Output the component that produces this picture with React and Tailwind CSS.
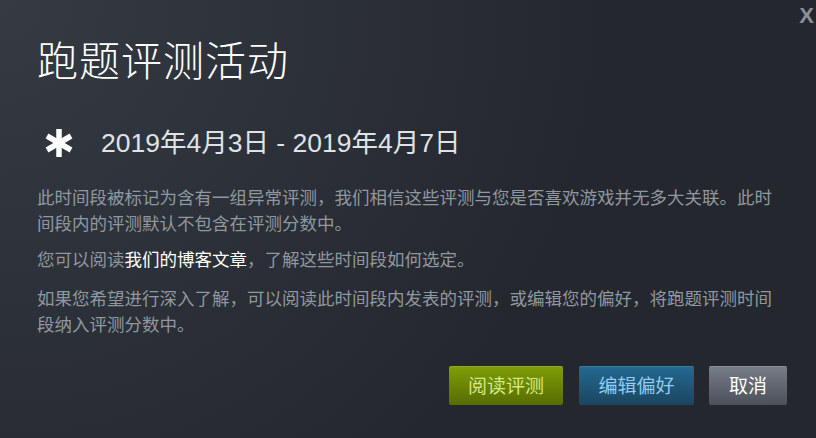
import React from 'react'

const cjk = "font-['Noto_Sans_CJK_SC',_'Noto_Sans',_sans-serif]"

function Asterisk() {
    return (
        <svg width="30" height="28" viewBox="0 0 30 28" className="shrink-0">
            <g stroke="#fff" strokeWidth="5.5" strokeLinecap="butt">
                <line x1="15" y1="0" x2="15" y2="28" />
                <line x1="3" y1="7" x2="27" y2="21" />
                <line x1="3" y1="21" x2="27" y2="7" />
            </g>
        </svg>
    )
}

export default function App() {
    return (
        <div className={`relative w-[816px] h-[438px] overflow-hidden bg-[#24272e] bg-[radial-gradient(circle_at_top_left,_rgba(74,81,92,0.45)_0%,_rgba(74,81,92,0)_65%)] ${cjk}`}>
            <button className="absolute top-[3px] right-[2px] text-[22px] leading-[26px] font-bold text-[#8b8f96] font-['Liberation_Sans',_sans-serif]">
                X
            </button>

            <div className="pl-[37px] pr-[40px] pt-[29px]">
                <h1 className="text-[41px] leading-[58px] font-light text-white tracking-[1px]">
                    跑题评测活动
                </h1>

                <div className="flex items-center mt-[40px] ml-[7px] h-[32px]">
                    <Asterisk />
                    <span className="ml-[27px] text-[26.5px] leading-[32px] text-[#dfe3e6] font-['Liberation_Sans',_'Noto_Sans_CJK_SC',_sans-serif]">
                        2019年4月3日 - 2019年4月7日
                    </span>
                </div>

                <div className="mt-[25px] text-[17.5px] leading-[26px] text-[#8f98a0] max-w-[745px]">
                    <p>此时间段被标记为含有一组异常评测，我们相信这些评测与您是否喜欢游戏并无多大关联。此时间段内的评测默认不包含在评测分数中。</p>
                    <p className="mt-[10px]">您可以阅读<span className="text-white">我们的博客文章</span>，了解这些时间段如何选定。</p>
                    <p className="mt-[13px]">如果您希望进行深入了解，可以阅读此时间段内发表的评测，或编辑您的偏好，将跑题评测时间段纳入评测分数中。</p>
                </div>
            </div>

            <div className="absolute right-[29px] bottom-[33px] flex">
                <button className="h-[39px] w-[114px] rounded-[2px] bg-gradient-to-b from-[#809f07] to-[#576c02] text-[#d2e885] text-[19px] shadow-[inset_0_1px_0_rgba(255,255,255,0.12)]">
                    阅读评测
                </button>
                <button className="ml-[16px] h-[39px] w-[115px] rounded-[2px] bg-gradient-to-b from-[#236a91] to-[#1b4560] text-[#8fcdf2] text-[19px] shadow-[inset_0_1px_0_rgba(255,255,255,0.12)]">
                    编辑偏好
                </button>
                <button className="ml-[15px] h-[39px] w-[78px] rounded-[2px] bg-gradient-to-b from-[#787e88] to-[#4b5059] text-white text-[19px] shadow-[inset_0_1px_0_rgba(255,255,255,0.15)]">
                    取消
                </button>
            </div>
        </div>
    )
}
